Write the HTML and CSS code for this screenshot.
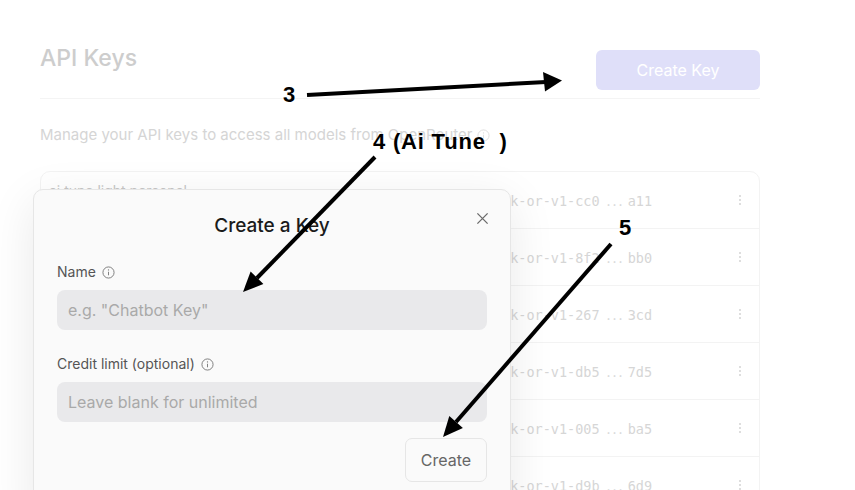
FILE: index.html
```html
<!DOCTYPE html>
<html lang="en">

<head>
    <meta charset="UTF-8">
    <meta name="viewport" content="width=device-width, initial-scale=1.0">
    <title>API Keys</title>
    <link rel="stylesheet" href="styles.css">
</head>

<body>
    <div id="page">
        <header class="page-head">
            <h1>API Keys</h1>
            <button class="btn-create">Create Key</button>
        </header>

        <p class="lead">Manage your API keys to access all models from OpenRouter
            <svg class="info" viewBox="0 0 14 14"><circle cx="7" cy="7" r="6" /><line x1="7" y1="6.2" x2="7" y2="10" /><circle class="dot" cx="7" cy="4.2" r="0.7" /></svg>
        </p>

        <div class="keys">
            <div class="key-row">
                <div class="key-name"><span>ai tune light personal</span><small>Created Mar 2</small></div>
                <div class="key-val">sk-or-v1-cc0<span class="dots">...</span>a11</div>
                <div class="menu"><i></i><i></i><i></i></div>
            </div>
            <div class="key-row">
                <div class="key-name"><span>default</span><small>Created Feb 11</small></div>
                <div class="key-val">sk-or-v1-8f2<span class="dots">...</span>bb0</div>
                <div class="menu"><i></i><i></i><i></i></div>
            </div>
            <div class="key-row">
                <div class="key-name"><span>test</span><small>Created Jan 28</small></div>
                <div class="key-val">sk-or-v1-267<span class="dots">...</span>3cd</div>
                <div class="menu"><i></i><i></i><i></i></div>
            </div>
            <div class="key-row">
                <div class="key-name"><span>staging</span><small>Created Jan 9</small></div>
                <div class="key-val">sk-or-v1-db5<span class="dots">...</span>7d5</div>
                <div class="menu"><i></i><i></i><i></i></div>
            </div>
            <div class="key-row">
                <div class="key-name"><span>local dev</span><small>Created Dec 20</small></div>
                <div class="key-val">sk-or-v1-005<span class="dots">...</span>ba5</div>
                <div class="menu"><i></i><i></i><i></i></div>
            </div>
            <div class="key-row">
                <div class="key-name"><span>scripts</span><small>Created Dec 4</small></div>
                <div class="key-val">sk-or-v1-d9b<span class="dots">...</span>6d9</div>
                <div class="menu"><i></i><i></i><i></i></div>
            </div>
        </div>
    </div>

    <div class="modal">
        <h2>Create a Key</h2>
        <svg class="close" viewBox="0 0 14 14"><path d="M1.5 1.5 L12.5 12.5 M12.5 1.5 L1.5 12.5" /></svg>

        <label class="field-label">Name
            <svg class="info" viewBox="0 0 14 14"><circle cx="7" cy="7" r="6" /><line x1="7" y1="6.2" x2="7" y2="10" /><circle class="dot" cx="7" cy="4.2" r="0.7" /></svg>
        </label>
        <input type="text" placeholder='e.g. "Chatbot Key"' />

        <label class="field-label">Credit limit (optional)
            <svg class="info" viewBox="0 0 14 14"><circle cx="7" cy="7" r="6" /><line x1="7" y1="6.2" x2="7" y2="10" /><circle class="dot" cx="7" cy="4.2" r="0.7" /></svg>
        </label>
        <input type="text" placeholder="Leave blank for unlimited" />

        <div class="modal-foot">
            <button class="btn-submit">Create</button>
        </div>
    </div>

    <svg class="notes" viewBox="0 0 855 490">
        <line x1="307" y1="95" x2="546" y2="82" />
        <polygon points="562,80.5 543,72 545,91.5" />
        <line x1="375" y1="157" x2="257" y2="278" />
        <polygon points="243,292 263.4,284 250.6,271.4" />
        <line x1="611" y1="244" x2="456" y2="422" />
        <polygon points="443,437 462.9,427.9 449.3,416.1" />
        <text x="283" y="102">3</text>
        <text class="wide" x="373" y="149">4 (Ai Tune  )</text>
        <text x="619" y="235">5</text>
    </svg>
</body>

</html>
```

FILE: styles.css
```css
body {
    margin: 0;
    background: #fff;
    font-family: Inter, "Noto Sans", sans-serif;
    width: 855px;
    height: 490px;
    overflow: hidden;
    position: relative;
}

#page {
    width: 720px;
    padding: 42px 0 0 40px;
}

.page-head {
    display: flex;
    justify-content: space-between;
    align-items: flex-start;
    padding-bottom: 8px;
    border-bottom: 1px solid #f4f4f4;
}

.page-head h1 {
    margin: 0;
    font-size: 23px;
    line-height: 32px;
    font-weight: 500;
    color: #cdcdcd;
}

.btn-create {
    margin-top: 8px;
    width: 164px;
    height: 40px;
    border: none;
    border-radius: 6px;
    background: #dfdff9;
    color: #fff;
    font-family: inherit;
    font-size: 16px;
}

.lead {
    margin: 24px 0;
    font-size: 15px;
    line-height: 24px;
    color: #d5d5d5;
    display: flex;
    align-items: center;
    gap: 5px;
}

.lead .info {
    stroke: #dcdcdc;
}

.lead .info .dot {
    fill: #dcdcdc;
}

.keys {
    border: 1px solid #f3f3f3;
    border-radius: 10px;
}

.key-row {
    display: grid;
    grid-template-columns: 453px 1fr 20px;
    align-items: center;
    height: 56px;
    padding: 0 9px 0 8px;
    border-bottom: 1px solid #f3f3f3;
}

.key-name {
    align-self: start;
    padding-top: 9px;
    display: flex;
    flex-direction: column;
    font-size: 14px;
    line-height: 20px;
    color: #c6c6c6;
}

.key-name small {
    font-size: 12px;
    color: #dcdcdc;
}

.key-val {
    font-family: "DejaVu Sans Mono", "Liberation Mono", monospace;
    font-size: 13.5px;
    color: #d6d6d6;
}

.key-val .dots {
    font-family: Inter, sans-serif;
    font-size: 14px;
    letter-spacing: 2px;
    margin: 0 3px 0 7px;
}

.menu {
    display: flex;
    flex-direction: column;
    align-items: center;
    gap: 2px;
}

.menu i {
    width: 2px;
    height: 2px;
    background: #dedede;
}

.modal {
    position: absolute;
    left: 33px;
    top: 189px;
    width: 478px;
    height: 330px;
    box-sizing: border-box;
    padding: 24px 23px;
    background: #fafafa;
    border: 1px solid #e6e6e6;
    border-radius: 10px;
    box-shadow: 0 12px 48px rgba(0, 0, 0, 0.09);
}

.modal h2 {
    margin: 0;
    text-align: center;
    font-size: 19px;
    line-height: 24px;
    font-weight: 500;
    color: #1b1b1b;
}

.close {
    position: absolute;
    top: 22px;
    right: 21px;
    width: 13px;
    height: 13px;
    fill: none;
    stroke: #6a6a6a;
    stroke-width: 1.4;
}

.field-label {
    display: flex;
    align-items: center;
    gap: 6px;
    margin-top: 24px;
    font-size: 14px;
    line-height: 20px;
    color: #555;
}

.info {
    width: 13px;
    height: 13px;
    fill: none;
    stroke: #777;
    stroke-width: 1;
}

.info .dot {
    fill: #777;
    stroke: none;
}

.modal input {
    display: block;
    width: 100%;
    height: 40px;
    box-sizing: border-box;
    margin-top: 8px;
    padding: 0 11px;
    border: none;
    border-radius: 8px;
    background: #e9e9eb;
    font-family: inherit;
    font-size: 16px;
    outline: none;
}

.modal input::placeholder {
    color: #a9a9a9;
}

.modal-foot {
    display: flex;
    justify-content: flex-end;
    margin-top: 16px;
}

.btn-submit {
    width: 82px;
    height: 44px;
    border: 1px solid #e6e6e6;
    border-radius: 7px;
    background: #fafafa;
    color: #666;
    font-family: inherit;
    font-size: 16px;
}

.notes {
    position: absolute;
    left: 0;
    top: 0;
    width: 855px;
    height: 490px;
    pointer-events: none;
}

.notes line {
    stroke: #000;
    stroke-width: 4;
}

.notes polygon {
    fill: #000;
}

.notes text {
    font-family: "Liberation Sans", Arial, sans-serif;
    font-weight: bold;
    font-size: 22px;
    fill: #000;
    white-space: pre;
}

.notes text.wide {
    letter-spacing: 0.8px;
}
```
